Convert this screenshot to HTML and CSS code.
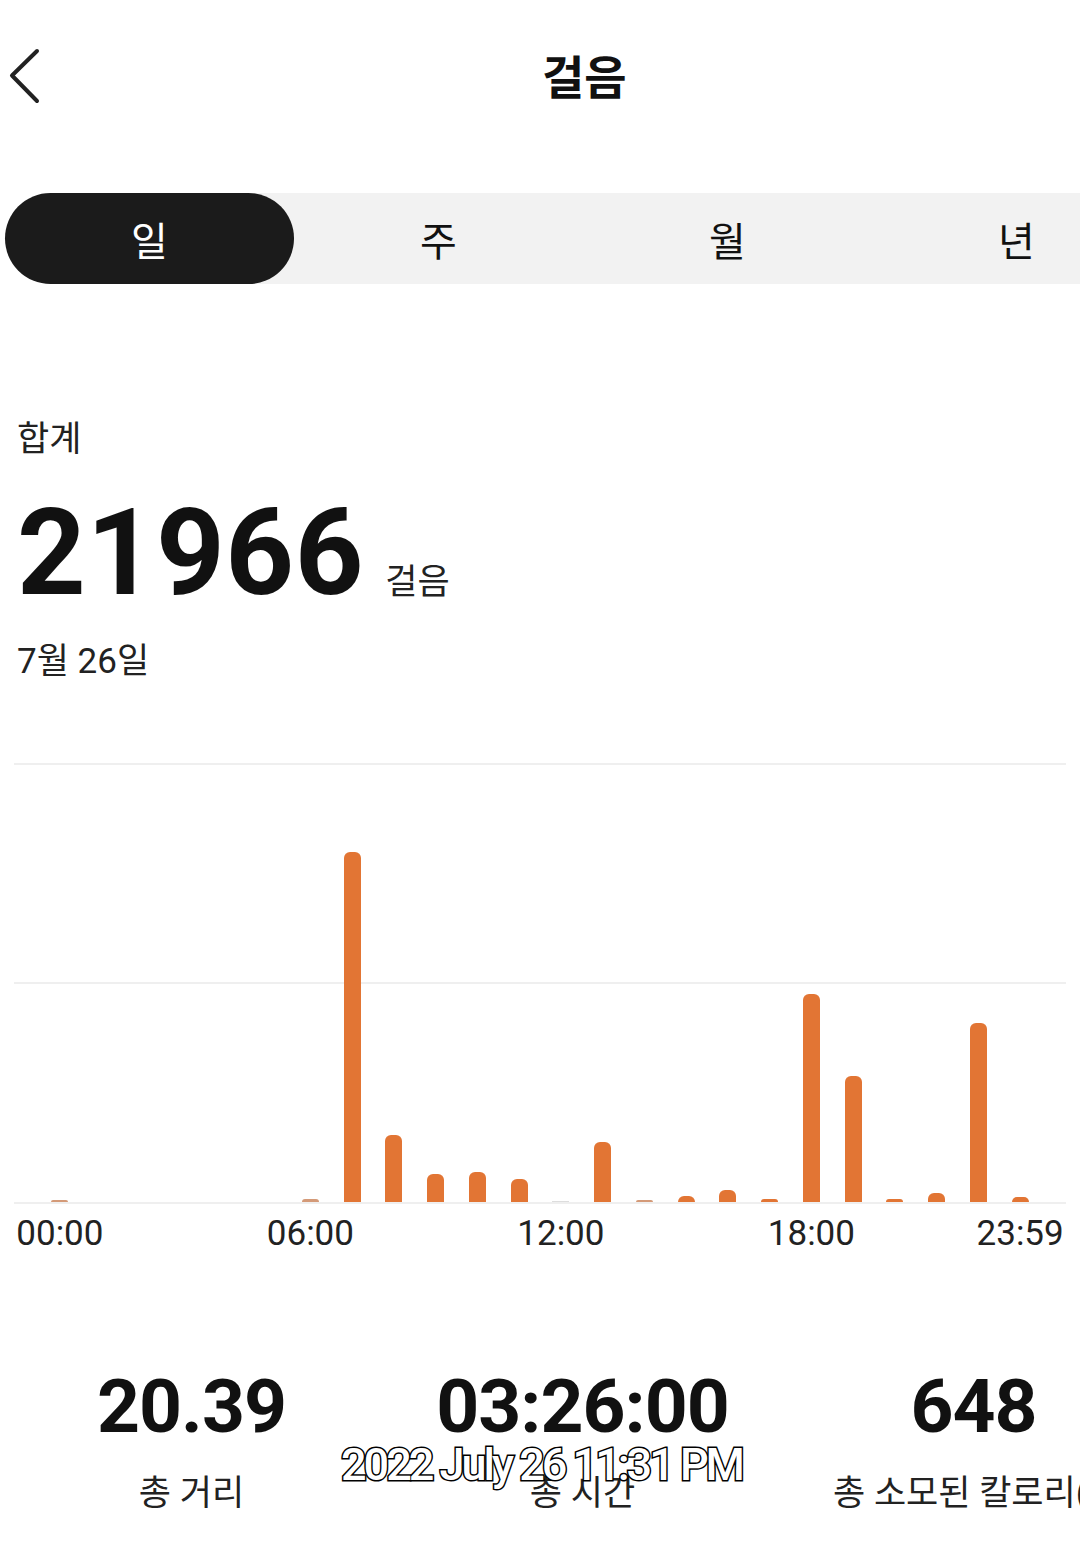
FILE: index.html
```html
<!DOCTYPE html>
<html lang="ko">
<head>
<meta charset="utf-8">
<title>걸음</title>
<link rel="stylesheet" href="styles.css">
</head>
<body>
<div class="page">
  <header class="header">
    <span class="back">
      <svg width="44" height="60" viewBox="0 0 44 60"><path d="M37 5 L12 29.5 L37 55" fill="none" stroke="#222" stroke-width="4" stroke-linecap="round" stroke-linejoin="round"/></svg>
    </span>
    <h1 class="title">걸음</h1>
  </header>

  <nav class="tabs">
    <div class="tab active">일</div>
    <div class="tab">주</div>
    <div class="tab">월</div>
    <div class="tab">년</div>
  </nav>

  <section class="summary">
    <div class="sum-label">합계</div>
    <div class="sum-row"><span class="sum-value">21966</span><span class="sum-unit">걸음</span></div>
    <div class="sum-date">7월 26일</div>
  </section>

  <section class="chart">
    <div class="bars">
      <div class="slot"><div class="bar faint" style="height:2px"></div></div>
      <div class="slot"></div>
      <div class="slot"></div>
      <div class="slot"></div>
      <div class="slot"></div>
      <div class="slot"></div>
      <div class="slot"><div class="bar faint" style="height:3px"></div></div>
      <div class="slot"><div class="bar" style="height:350px"></div></div>
      <div class="slot"><div class="bar" style="height:67px"></div></div>
      <div class="slot"><div class="bar" style="height:28px"></div></div>
      <div class="slot"><div class="bar" style="height:30px"></div></div>
      <div class="slot"><div class="bar" style="height:23px"></div></div>
      <div class="slot"><div class="bar ghost" style="height:1px"></div></div>
      <div class="slot"><div class="bar" style="height:60px"></div></div>
      <div class="slot"><div class="bar faint" style="height:2px"></div></div>
      <div class="slot"><div class="bar" style="height:6px"></div></div>
      <div class="slot"><div class="bar" style="height:12px"></div></div>
      <div class="slot"><div class="bar" style="height:3px"></div></div>
      <div class="slot"><div class="bar" style="height:208px"></div></div>
      <div class="slot"><div class="bar" style="height:126px"></div></div>
      <div class="slot"><div class="bar" style="height:3px"></div></div>
      <div class="slot"><div class="bar" style="height:9px"></div></div>
      <div class="slot"><div class="bar" style="height:179px"></div></div>
      <div class="slot"><div class="bar" style="height:5px"></div></div>
    </div>
  </section>

  <div class="axis">
    <div class="tick"><span>00:00</span></div>
    <div class="tick"></div><div class="tick"></div><div class="tick"></div><div class="tick"></div><div class="tick"></div>
    <div class="tick"><span>06:00</span></div>
    <div class="tick"></div><div class="tick"></div><div class="tick"></div><div class="tick"></div><div class="tick"></div>
    <div class="tick"><span>12:00</span></div>
    <div class="tick"></div><div class="tick"></div><div class="tick"></div><div class="tick"></div><div class="tick"></div>
    <div class="tick"><span>18:00</span></div>
    <div class="tick"></div><div class="tick"></div><div class="tick"></div><div class="tick"></div>
    <div class="tick"><span>23:59</span></div>
  </div>

  <section class="stats">
    <div class="stat"><div class="stat-value">20.39</div><div class="stat-label">총 거리</div></div>
    <div class="stat"><div class="stat-value">03:26:00</div><div class="stat-label">총 시간</div></div>
    <div class="stat"><div class="stat-value">648</div><div class="stat-label stat-label-left">총 소모된 칼로리(kcal)</div></div>
  </section>

  <div class="stamp">2022 July 26 11:31 PM</div>
</div>
</body>
</html>
```

FILE: styles.css
```css
html, body {
  margin: 0;
  padding: 0;
  background: #fff;
}
body {
  width: 1080px;
  height: 1549px;
  overflow: hidden;
  font-family: Roboto, "Noto Sans CJK KR", sans-serif;
  color: #111;
}
.page {
  position: relative;
  width: 1080px;
  height: 1549px;
  overflow: hidden;
}

/* header */
.header {
  display: flex;
  align-items: center;
  height: 152px;
}
.back {
  display: flex;
  width: 44px;
  height: 60px;
}
.title {
  margin: 4px 0 0 498px;
  font-size: 46px;
  font-weight: 700;
  line-height: 52px;
  color: #111;
}

/* tabs */
.tabs {
  display: grid;
  grid-template-columns: repeat(4, 289px);
  width: 1156px;
  height: 91px;
  margin: 41px 0 0 5px;
  background: linear-gradient(to right, transparent 144px, #f2f2f2 144px);
}
.tab {
  display: flex;
  align-items: center;
  justify-content: center;
  font-size: 40px;
  color: #111;
  border-radius: 46px;
}
.tab.active {
  background: #1b1b1b;
  color: #fff;
}

/* summary */
.summary {
  padding-left: 17px;
}
.sum-label {
  margin-top: 136px;
  font-size: 35px;
  line-height: 40px;
  color: #222;
}
.sum-row {
  display: flex;
  align-items: baseline;
  margin-top: 33px;
}
.sum-value {
  font-size: 120px;
  font-weight: 700;
  line-height: 120px;
  color: #111;
  letter-spacing: 0.6px;
}
.sum-unit {
  margin-left: 21px;
  font-size: 35px;
  color: #222;
}
.sum-date {
  margin-top: 29px;
  font-size: 35px;
  line-height: 40px;
  color: #222;
}

/* chart */
.chart {
  margin: 81px 0 0 14px;
  width: 1052px;
  height: 441px;
  background:
    linear-gradient(#efefef, #efefef) 0 0 / 100% 2px no-repeat,
    linear-gradient(#efefef, #efefef) 0 219px / 100% 2px no-repeat,
    linear-gradient(#efefef, #efefef) 0 439px / 100% 2px no-repeat;
}
.bars {
  display: flex;
  align-items: flex-end;
  height: 439px;
  padding: 0 25px;
}
.slot {
  flex: 1 1 0;
  min-width: 0;
  display: flex;
  justify-content: center;
  align-items: flex-end;
  height: 100%;
}
.bar {
  width: 17px;
  background: #e27534;
  border-radius: 6px 6px 0 0;
}
.bar.faint {
  background: #d49a78;
  border-radius: 3px 3px 0 0;
}
.bar.ghost {
  background: #ddd;
  border-radius: 0;
}

/* axis */
.axis {
  display: flex;
  margin: 10px 0 0 14px;
  width: 1052px;
  padding: 0 25px;
  box-sizing: border-box;
}
.tick {
  flex: 1 1 0;
  min-width: 0;
  display: flex;
  justify-content: center;
  font-size: 35px;
  line-height: 40px;
  color: #222;
  white-space: nowrap;
}

/* stats */
.stats {
  display: grid;
  grid-template-columns: repeat(3, 391px);
  margin: 115px 0 0 -4px;
}
.stat {
  display: flex;
  flex-direction: column;
  align-items: center;
}
.stat-value {
  font-size: 75px;
  font-weight: 700;
  line-height: 75px;
  color: #111;
  letter-spacing: -1px;
  white-space: nowrap;
}
.stat-label {
  margin-top: 28px;
  font-size: 35px;
  line-height: 44px;
  color: #222;
  white-space: nowrap;
}
.stat-label-left {
  align-self: flex-start;
  margin-left: 55px;
}

/* overlay timestamp */
.stamp {
  position: absolute;
  left: 341px;
  top: 1437px;
  font-family: Roboto, sans-serif;
  font-size: 45px;
  font-weight: 500;
  line-height: 56px;
  letter-spacing: -3px;
  color: #fff;
  -webkit-text-stroke: 3px #000;
  paint-order: stroke fill;
  white-space: nowrap;
}
```
